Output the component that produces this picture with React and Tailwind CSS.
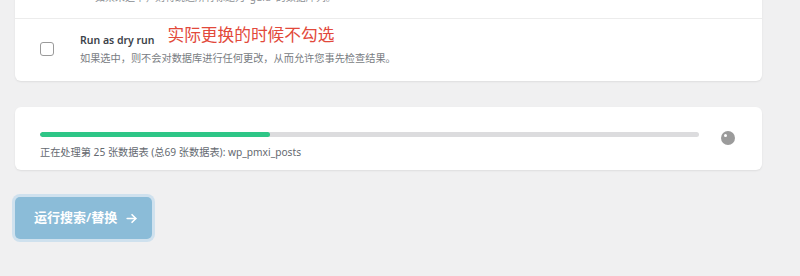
import React from 'react';

const font = { fontFamily: '"Noto Sans", "Noto Sans CJK SC", sans-serif' };

export default function App() {
  const processed = 25;
  const total = 69;

  return (
    <div className="w-[800px] h-[276px] overflow-hidden bg-[#f0f0f1]" style={font}>
      <div className="pl-[15px] pr-[38px]">
        {/* options card (scrolled) */}
        <div className="-mt-[10px] bg-white rounded-md shadow-[0_1px_2px_rgba(0,0,0,0.08)]">
          <div className="h-[29px] pl-[80px] border-b border-[#ececec] overflow-hidden">
            <p className="text-[10px] leading-[15px] text-[#8c8f94]">
              如果未选中，则将跳过所有标题为 'guid' 的数据库列。
            </p>
          </div>
          <div className="flex items-center pl-[25px] pt-[6px] pb-[15px]">
            <input
              type="checkbox"
              className="appearance-none w-[14px] h-[14px] mt-[6px] rounded-[3px] border border-[#9a9a9a] bg-white shrink-0"
            />
            <div className="ml-[26px]">
              <div className="flex items-end">
                <span className="text-[10.5px] font-semibold text-[#3c434a] leading-[16px]">Run as dry run</span>
                <span className="ml-[13px] text-[16.7px] leading-[20px] text-[#e2493b] mb-[3px]">实际更换的时候不勾选</span>
              </div>
              <p className="text-[10.2px] leading-[16px] text-[#787c82] mt-[2px]">
                如果选中，则不会对数据库进行任何更改，从而允许您事先检查结果。
              </p>
            </div>
          </div>
        </div>

        {/* progress card */}
        <div className="mt-[26px] bg-white rounded-md shadow-[0_1px_2px_rgba(0,0,0,0.08)] pl-[25px] pr-[27px] pt-[25px] pb-[10px]">
          <div className="flex items-start">
            <div className="flex-1 h-[5px] rounded-full bg-[#dcdcde] overflow-hidden">
              <div
                className="h-full rounded-full bg-[#2ec687]"
                style={{ width: `${(230 / 660) * 100}%` }}
              />
            </div>
            <div className="ml-[22px] -mt-[1px] relative w-[14px] h-[14px] rounded-full bg-[#9b9b9b]">
              <span className="absolute left-[3px] top-[3px] w-[3px] h-[3px] rounded-full bg-white" />
            </div>
          </div>
          <p className="-mt-[1px] text-[10.2px] leading-[16px] text-[#646970]">
            正在处理第 {processed} 张数据表 (总{total} 张数据表): wp_pmxi_posts
          </p>
        </div>

        {/* run button */}
        <button className="mt-[27px] flex items-center w-[137px] h-[42px] rounded-[5px] bg-[#8bbcd8] ring-[3px] ring-[#cfe1ee] pl-[19px] text-white text-[13px] font-semibold">
          <span>运行搜索/替换</span>
          <svg className="ml-[8px]" width="13" height="13" viewBox="0 0 24 24" fill="none" stroke="currentColor" strokeWidth="3" strokeLinecap="round" strokeLinejoin="round">
            <path d="M4 12h16" />
            <path d="M13 5l7 7-7 7" />
          </svg>
        </button>
      </div>
    </div>
  );
}
